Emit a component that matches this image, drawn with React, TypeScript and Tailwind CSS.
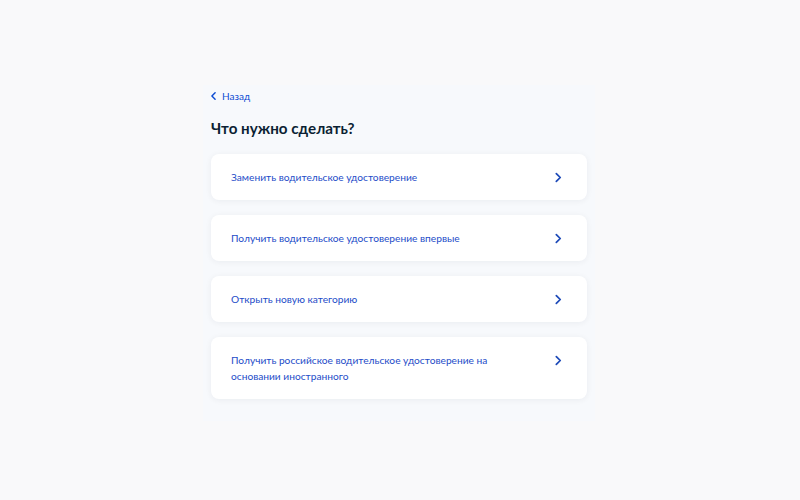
import React from 'react';

const options = [
  'Заменить водительское удостоверение',
  'Получить водительское удостоверение впервые',
  'Открыть новую категорию',
  'Получить российское водительское удостоверение на основании иностранного',
];

const Chevron: React.FC<{ className?: string }> = ({ className }) => (
  <svg viewBox="0 0 8 12" className={className} fill="none">
    <path d="M1.5 1.5 6 6l-4.5 4.5" stroke="currentColor" strokeWidth="2" strokeLinecap="round" strokeLinejoin="round" />
  </svg>
);

const App: React.FC = () => {
  return (
    <div className="w-[800px] h-[500px] bg-[#f9f9fa] pl-[203px] pt-[85px] font-['Lato','Liberation_Sans',sans-serif]">
      <div className="w-[392px] h-[336px] bg-[#f7f9fc] px-2 pt-[4px]">
        {/* Назад */}
        <button className="flex items-center gap-[6px] text-[10px] leading-[14px] text-[#0d4cd3] h-[14px]">
          <svg viewBox="0 0 6 10" className="w-[5px] h-[8px] rotate-180" fill="none">
            <path d="M1 1l4 4-4 4" stroke="currentColor" strokeWidth="1.8" strokeLinecap="round" strokeLinejoin="round" />
          </svg>
          Назад
        </button>

        <h1 className="mt-[15px] text-[15.2px] leading-[20px] font-bold text-[#0b1f33]">Что нужно сделать?</h1>

        {/* Варианты */}
        <div className="mt-[16px] flex flex-col gap-[15px]">
          {options.map((o) => (
            <div
              key={o}
              className="bg-white rounded-[8px] shadow-[0_1px_6px_rgba(11,31,51,0.06)] flex items-start justify-between pl-5 pr-[25px] py-[15px]"
            >
              <span className="text-[10.2px] leading-[16px] text-[#1d4cc8] max-w-[280px]">{o}</span>
              <div className="h-[16px] flex items-center">
                <Chevron className="w-[7px] h-[11px] text-[#1d4ab8] shrink-0" />
              </div>
            </div>
          ))}
        </div>
      </div>
    </div>
  );
};

export default App;
